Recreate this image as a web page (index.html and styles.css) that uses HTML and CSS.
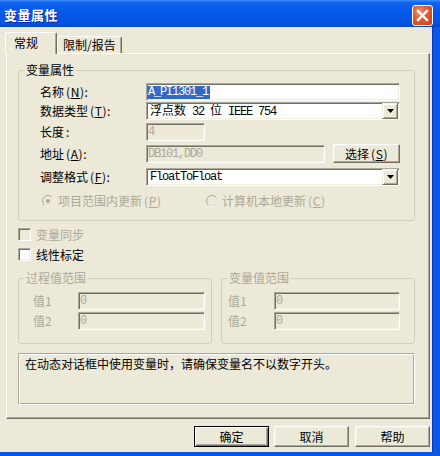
FILE: index.html
```html
<!DOCTYPE html>
<html lang="zh-CN">
<head>
<meta charset="utf-8">
<title>变量属性</title>
<link rel="stylesheet" href="styles.css">
</head>
<body>
<div class="window">
  <div class="titlebar">
    <span class="title">变量属性</span>
    <span class="close"><svg width="21" height="21" viewBox="0 0 21 21"><path d="M6 6 L15 15 M15 6 L6 15" stroke="#fff" stroke-width="2.4" stroke-linecap="square"/></svg></span>
  </div>
  <div class="frame">
    <div class="tabs">
      <div class="tab active">常规</div>
      <div class="tab">限制/报告</div>
    </div>
    <div class="panel">
      <div class="group main">
        <div class="legend">变量属性</div>
        <div class="row r1"><span class="lbl">名称<span class="asc">(<u>N</u>):</span></span><div class="edit w254"><span class="mono hl">A_PI1301_1</span></div></div>
        <div class="row r2"><span class="lbl">数据类型<span class="asc">(<u>T</u>):</span></span><div class="edit w254 combo"><span class="val"><span class="cjk">浮点数</span><span class="mono"> 32 </span><span class="cjk">位</span><span class="mono"> IEEE 754</span></span><span class="drop"><svg width="7" height="4" viewBox="0 0 7 4"><path d="M0 0H7L3.5 4Z" fill="#000"/></svg></span></div></div>
        <div class="row r3"><span class="lbl">长度<span class="asc">:</span></span><div class="edit w59 dis"><span class="mono">4</span></div></div>
        <div class="row r4"><span class="lbl">地址<span class="asc">(<u>A</u>):</span></span><div class="edit w179 dis"><span class="mono">DB101,DD0</span></div><div class="btn sel">选择<span class="asc">(<u>S</u>)</span></div></div>
        <div class="row r5"><span class="lbl">调整格式<span class="asc">(<u>F</u>):</span></span><div class="edit w254 combo"><span class="val mono">FloatToFloat</span><span class="drop"><svg width="7" height="4" viewBox="0 0 7 4"><path d="M0 0H7L3.5 4Z" fill="#000"/></svg></span></div></div>
        <div class="row radios">
          <span class="radio r-a"><svg width="12" height="12" viewBox="0 0 12 12"><circle cx="6" cy="6" r="5.5" fill="#ECE9D8" stroke="#ACA899"/><path d="M10 2.2 A5.5 5.5 0 0 1 2.2 10" fill="none" stroke="#fff"/><circle cx="6" cy="6" r="2" fill="#ACA899"/></svg><span class="dtext">项目范围内更新<span class="asc">(<u>P</u>)</span></span></span>
          <span class="radio r-b"><svg width="12" height="12" viewBox="0 0 12 12"><circle cx="6" cy="6" r="5.5" fill="#ECE9D8" stroke="#ACA899"/><path d="M10 2.2 A5.5 5.5 0 0 1 2.2 10" fill="none" stroke="#fff"/></svg><span class="dtext">计算机本地更新<span class="asc">(<u>C</u>)</span></span></span>
        </div>
      </div>
      <div class="check c1"><span class="box dis"></span><span class="dtext">变量同步</span></div>
      <div class="check c2"><span class="box"></span><span>线性标定</span></div>
      <div class="ranges">
        <div class="group g1">
          <div class="legend dtext">过程值范围</div>
          <div class="row rr1"><span class="lbl2 dtext">值1</span><div class="edit w127 dis"><span class="mono">0</span></div></div>
          <div class="row rr2"><span class="lbl2 dtext">值2</span><div class="edit w127 dis"><span class="mono">0</span></div></div>
        </div>
        <div class="group g2">
          <div class="legend dtext">变量值范围</div>
          <div class="row rr1"><span class="lbl3 dtext">值1</span><div class="edit w126 dis"><span class="mono">0</span></div></div>
          <div class="row rr2"><span class="lbl3 dtext">值2</span><div class="edit w126 dis"><span class="mono">0</span></div></div>
        </div>
      </div>
      <div class="info">在动态对话框中使用变量时，请确保变量名不以数字开头。</div>
    </div>
    <div class="buttons">
      <div class="btn big default">确定</div>
      <div class="btn big">取消</div>
      <div class="btn big help">帮助</div>
    </div>
  </div>
</div>
</body>
</html>
```

FILE: styles.css
```css
* { box-sizing: border-box; }
html, body { margin: 0; padding: 0; }
body {
  width: 440px; height: 456px; overflow: hidden;
  background: #ECE9D8;
  font-family: "Noto Sans CJK SC", "Liberation Sans", sans-serif;
  font-size: 12px; line-height: 14px; color: #000;
}
u { text-decoration: underline; text-underline-offset: 1px; }
.asc { margin-left: 2px; letter-spacing: 0.6px; }
.window { width: 440px; height: 456px; display: flex; flex-direction: column; }
.titlebar {
  height: 27px; flex: none; display: flex; align-items: center;
  padding: 3px 7px 0 4px;
  background: linear-gradient(#3D8DF8 0%, #0F62EB 10%, #0558E7 45%, #0254E2 85%, #0046C8 100%);
}
.title { flex: 1; color: #fff; font-weight: bold; font-size: 13px; letter-spacing: 0.5px; text-shadow: 1px 1px #0A2A9A; }
.close {
  width: 21px; height: 21px; display: block; border: 1px solid #fff; border-radius: 3px;
  background: radial-gradient(circle at 35% 30%, #F0906A 0%, #E0592F 45%, #C8401A 100%);
}
.close svg { display: block; margin: -1px; }
.frame {
  flex: 1; display: flex; flex-direction: column;
  border-right: 7px solid #0758E8; border-bottom: 4px solid #0758E8;
  box-shadow: inset -1px 0 #0038C0;
  padding: 5px 3px 0 6px;
}
.tabs { display: flex; align-items: flex-end; height: 21px; position: relative; z-index: 1; margin-left: -1px; }
.tab {
  height: 17px; padding-left: 5px; line-height: 16px;
  border-top: 1px solid #fff; border-left: 1px solid #fff; border-right: 1px solid #716F64;
  border-top-left-radius: 2px; border-top-right-radius: 2px;
  box-shadow: inset -1px 0 #ACA899;
  background: #ECE9D8;
}
.tab.active { width: 52px; height: 22px; margin-bottom: -1px; padding-left: 8px; line-height: 20px; }
.tab:not(.active) { width: 65px; }
.panel {
  height: 366px; flex: none;
  border: 1px solid; border-color: #fff #716F64 #716F64 #fff;
  box-shadow: inset -1px -1px #ACA899;
  padding: 0 0 0 11px;
}
.group { border: 1px solid #D0D0BF; border-radius: 3px; }
.legend { width: fit-content; margin-top: -8px; padding: 0 2px; background: #ECE9D8; line-height: 14px; height: 14px; }
.main { margin-top: 16px; width: 397px; height: 151px; padding-left: 21px; }
.main .legend { margin-left: -16px; }
.row { display: flex; align-items: center; height: 18px; }
.lbl { width: 106px; flex: none; white-space: nowrap; }
.r1 { margin-top: 6px; }
.r2 { margin-top: 1px; }
.r3 { margin-top: 3px; }
.r4 { margin-top: 4px; }
.r5 { margin-top: 5px; }
.edit {
  height: 18px; flex: none; display: flex; align-items: center;
  background: #fff; padding-left: 1px; overflow: hidden; white-space: nowrap;
  border: 1px solid; border-color: #ACA899 #fff #fff #ACA899;
  box-shadow: inset 1px 1px #716F64, inset -1px -1px #F1EFE2;
}
.edit.dis { background: #ECE9D8; color: #ACA899; }
.w254 { width: 254px; }
.w59 { width: 59px; }
.w179 { width: 179px; }
.w127 { width: 127px; }
.w126 { width: 126px; }
.mono { font-family: "Liberation Mono", monospace; font-size: 12px; letter-spacing: -1.2px; white-space: pre; }
.cjk { font-family: "Noto Sans CJK SC", sans-serif; font-size: 12px; }
.hl { background: #316AC5; color: #fff; line-height: 13px; padding-right: 2px; }
.combo .val { flex: 1; padding-left: 2px; }
.drop {
  width: 16px; height: 16px; flex: none; display: flex; align-items: center; justify-content: center;
  border: 1px solid; border-color: #F1EFE2 #716F64 #716F64 #F1EFE2;
  box-shadow: inset 1px 1px #fff, inset -1px -1px #ACA899;
  background: #ECE9D8; margin-right: 1px;
}
.btn {
  display: flex; align-items: center; justify-content: center;
  border: 1px solid; border-color: #fff #716F64 #716F64 #fff;
  box-shadow: inset -1px -1px #ACA899, inset 1px 1px #F1EFE2;
  background: #ECE9D8;
}
.btn.sel { width: 67px; height: 19px; margin-left: 8px; margin-top: -1px; }
.radios { height: 14px; margin-top: 8px; }
.radio { display: flex; align-items: center; gap: 4px; }
.radio svg { flex: none; }
.r-a { margin-left: 2px; width: 164px; }
.dtext { color: #ACA899; }
.check { display: flex; align-items: center; gap: 5px; height: 13px; }
.c1 { margin-top: 7px; }
.c2 { margin-top: 7px; }
.box {
  width: 13px; height: 13px; flex: none; background: #fff;
  border: 1px solid; border-color: #ACA899 #fff #fff #ACA899;
  box-shadow: inset 1px 1px #716F64, inset -1px -1px #F1EFE2;
}
.box.dis { background: #ECE9D8; }
.ranges { display: flex; gap: 9px; margin-top: 17px; }
.g1, .g2 { width: 194px; height: 66px; }
.g1 { padding-left: 14px; }
.g1 .legend { margin-left: -9px; }
.g2 { padding-left: 6px; }
.g2 .legend { margin-left: -1px; }
.lbl2 { width: 45px; flex: none; }
.lbl3 { width: 46px; flex: none; }
.rr1 { margin-top: 7px; }
.rr2 { margin-top: 2px; }
.info {
  margin-top: 9px; width: 397px; height: 52px; padding: 3px 6px;
  border: 1px solid; border-color: #ACA899 #fff #fff #ACA899;
  box-shadow: 1px 1px #fff inset, -1px -1px #ACA899 inset;
}
.buttons { display: flex; justify-content: flex-end; gap: 5px; margin-top: 7px; }
.btn.big { width: 75px; height: 21px; }
.btn.help { margin-left: 1px; }
.btn.default {
  border: 1px solid #000;
  box-shadow: inset 1px 1px #fff, inset -1px -1px #716F64, inset -2px -2px #ACA899;
}
```
